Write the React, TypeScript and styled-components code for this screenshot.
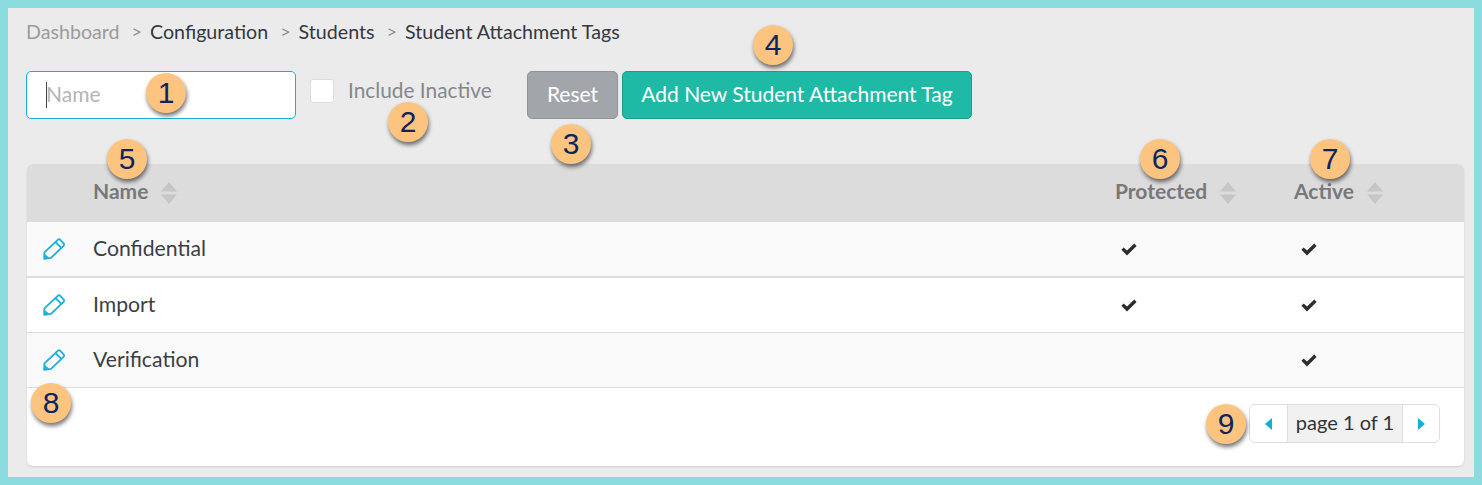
import React from "react";
import styled, { createGlobalStyle } from "styled-components";

const GlobalStyle = createGlobalStyle`
  html, body {
    margin: 0;
    padding: 0;
    background: #8adcdf;
  }
  body {
    font-family: Lato, "Liberation Sans", sans-serif;
  }
`;

const Frame = styled.div`
  position: relative;
  box-sizing: border-box;
  width: 1482px;
  height: 485px;
  border: 8px solid #8adcdf;
  background: #ebebeb;
  padding: 11px 10px 11px 18px;
  overflow: hidden;
`;

const Breadcrumbs = styled.nav`
  display: flex;
  align-items: center;
  height: 24px;
  font-size: 19.65px;
  color: #33383f;
`;

const Crumb = styled.span<{ $muted?: boolean }>`
  color: ${(p) => (p.$muted ? "#9b9b9b" : "#33383f")};
`;

const Sep = styled.span`
  color: #8f8f8f;
  font-size: 18px;
  margin: 0 8px 0 12px;
`;

const Toolbar = styled.div`
  display: flex;
  align-items: flex-start;
  margin-top: 28px;
  height: 48px;
`;

const NameInput = styled.div`
  box-sizing: border-box;
  display: flex;
  align-items: center;
  width: 270px;
  height: 48px;
  padding: 0 0 4px 19px;
  background: #fff;
  border: 1px solid #17b0d2;
  border-radius: 5px;
  font-size: 21px;
  color: #b4b4b4;
`;

const Caret = styled.span`
  width: 1px;
  height: 26px;
  background: #444;
  margin: 4px -1px 0 0;
`;

const CheckBox = styled.span`
  box-sizing: border-box;
  width: 24px;
  height: 24px;
  margin: 8px 14px 0 14px;
  background: #fff;
  border: 1px solid #dcdcdc;
  border-radius: 3px;
`;

const CheckLabel = styled.span`
  font-size: 20.85px;
  line-height: 37px;
  color: #85888c;
  width: 179px;
`;

const Button = styled.button<{ $primary?: boolean }>`
  box-sizing: border-box;
  height: 48px;
  padding: 0 0 4px;
  width: ${(p) => (p.$primary ? "350px" : "91px")};
  margin-left: ${(p) => (p.$primary ? "4px" : "0")};
  font-family: inherit;
  font-size: 21px;
  color: #fff;
  background: ${(p) => (p.$primary ? "#1fbaa5" : "#a2a6aa")};
  border: 1px solid ${(p) => (p.$primary ? "#1a9f8d" : "#909499")};
  border-radius: 5px;
`;

const Card = styled.section`
  box-sizing: border-box;
  margin: 45px 0 0 1px;
  width: 1437px;
  height: 302px;
  background: #fff;
  border-radius: 6px;
  box-shadow: 0 1px 2px rgba(0, 0, 0, 0.12);
  overflow: hidden;
`;

const COLUMNS = "66px 1022px 179px 1fr";

const HeadRow = styled.div`
  display: grid;
  grid-template-columns: ${COLUMNS};
  align-items: center;
  height: 58px;
  background: #dcdcdc;
  font-size: 21px;
  font-weight: 700;
  color: #77787a;
`;

const HeadCell = styled.div<{ $col: number }>`
  grid-column: ${(p) => p.$col};
  display: flex;
  align-items: center;
  gap: 13px;
`;

const HeadLabel = styled.span`
  margin-top: -6px;
`;

const Row = styled.div<{ $odd?: boolean; $thick?: boolean }>`
  display: grid;
  grid-template-columns: ${COLUMNS};
  align-items: center;
  box-sizing: border-box;
  height: ${(p) => (p.$thick ? "56px" : "55px")};
  background: ${(p) => (p.$odd ? "#f9f9f9" : "#fff")};
  border-bottom: ${(p) => (p.$thick ? "2px" : "1px")} solid #dedede;
  font-size: 21.2px;
  color: #3b3f45;
`;

const RowName = styled.div`
  margin-top: -2px;
`;

const IconCell = styled.div`
  display: flex;
  padding-left: 16px;
`;

const CheckCell = styled.div<{ $pad: number }>`
  display: flex;
  padding-left: ${(p) => p.$pad}px;
`;

const SortIcon = styled.svg`
  display: block;
  width: 16px;
  height: 24px;
  color: #c6c6c6;
`;

const Footer = styled.div`
  display: flex;
  justify-content: flex-end;
  padding: 16px 24px 0 0;
`;

const Pager = styled.div`
  display: flex;
  box-sizing: border-box;
  height: 39px;
  width: 191px;
  background: #fff;
  border: 1px solid #dedede;
  border-radius: 6px;
  overflow: hidden;
`;

const PagerArrow = styled.span<{ $width: number }>`
  display: flex;
  align-items: center;
  justify-content: center;
  width: ${(p) => p.$width}px;
`;

const PagerLabel = styled.span`
  flex: 1;
  display: flex;
  align-items: center;
  justify-content: center;
  padding-bottom: 3px;
  background: #f1f1f1;
  border-left: 1px solid #dedede;
  border-right: 1px solid #dedede;
  font-size: 20px;
  color: #2f3338;
`;

const Badge = styled.span<{ $x: number; $y: number }>`
  position: absolute;
  left: ${(p) => p.$x - 8}px;
  top: ${(p) => p.$y - 8}px;
  display: flex;
  align-items: center;
  justify-content: center;
  width: 40px;
  height: 40px;
  border-radius: 50%;
  background: #fdc47f;
  box-shadow: 1px 3px 4px rgba(0, 0, 0, 0.55);
  font-family: "Liberation Sans", Arial, sans-serif;
  font-size: 30px;
  color: #0c2461;
`;

const PencilIcon = () => (
  <svg width="22" height="22" viewBox="0 0 22 22" fill="none" stroke="#1bb0d8" strokeWidth="1.8" strokeLinejoin="round">
    <path d="M1.2 20.8 L1.4 14.4 L15 1.6 Q16 .9 17 1.6 L20.8 5.6 Q21.4 6.6 20.8 7.6 L8 19.8 Z" />
    <path d="M12.4 4 L18.6 10.2" />
    <path d="M2 20 V16.8 L5.4 19.6 Z" fill="#1bb0d8" strokeWidth="1" />
  </svg>
);

const CheckIcon = () => (
  <svg width="16" height="13" viewBox="0 0 16 13">
    <path d="M.4 6.8 L2.7 4.5 L6 7.6 L13.3 .6 L15.6 2.9 L6 12.4 Z" fill="#2d2d2d" />
  </svg>
);

const Sort = () => (
  <SortIcon viewBox="0 0 16 24">
    <path d="M8 1 L16 10.5 H0 Z M0 13.5 H16 L8 23 Z" fill="currentColor" />
  </SortIcon>
);

const PagerCaret = ({ dir }: { dir: "left" | "right" }) => (
  <svg width="8" height="12" viewBox="0 0 8 12">
    <path d={dir === "left" ? "M7 0 V12 L0 6 Z" : "M1 0 V12 L8 6 Z"} fill="#0fb0d6" />
  </svg>
);

const rows = [
  { name: "Confidential", isProtected: true, active: true },
  { name: "Import", isProtected: true, active: true },
  { name: "Verification", isProtected: false, active: true },
];

const badges: [string, number, number][] = [
  ["1", 146, 73],
  ["2", 388, 102],
  ["3", 551, 124],
  ["4", 753, 25],
  ["5", 107, 139],
  ["6", 1140, 139],
  ["7", 1310, 139],
  ["8", 31, 383],
  ["9", 1206, 404],
];

export default function App() {
  return (
    <>
      <GlobalStyle />
      <Frame>
        <Breadcrumbs>
          <Crumb $muted>Dashboard</Crumb>
          <Sep>&gt;</Sep>
          <Crumb>Configuration</Crumb>
          <Sep>&gt;</Sep>
          <Crumb>Students</Crumb>
          <Sep>&gt;</Sep>
          <Crumb>Student Attachment Tags</Crumb>
        </Breadcrumbs>
        <Toolbar>
          <NameInput>
            <Caret />
            Name
          </NameInput>
          <CheckBox />
          <CheckLabel>Include Inactive</CheckLabel>
          <Button>Reset</Button>
          <Button $primary>Add New Student Attachment Tag</Button>
        </Toolbar>
        <Card>
          <HeadRow>
            <HeadCell $col={2}>
              <HeadLabel>Name</HeadLabel>
              <Sort />
            </HeadCell>
            <HeadCell $col={3}>
              <HeadLabel>Protected</HeadLabel>
              <Sort />
            </HeadCell>
            <HeadCell $col={4}>
              <HeadLabel>Active</HeadLabel>
              <Sort />
            </HeadCell>
          </HeadRow>
          {rows.map((row, i) => (
            <Row key={row.name} $odd={i % 2 === 0} $thick={i === 0}>
              <IconCell>
                <PencilIcon />
              </IconCell>
              <RowName>{row.name}</RowName>
              <CheckCell $pad={6}>{row.isProtected && <CheckIcon />}</CheckCell>
              <CheckCell $pad={7}>{row.active && <CheckIcon />}</CheckCell>
            </Row>
          ))}
          <Footer>
            <Pager>
              <PagerArrow $width={37}>
                <PagerCaret dir="left" />
              </PagerArrow>
              <PagerLabel>page 1 of 1</PagerLabel>
              <PagerArrow $width={36}>
                <PagerCaret dir="right" />
              </PagerArrow>
            </Pager>
          </Footer>
        </Card>
        {badges.map(([label, x, y]) => (
          <Badge key={label} $x={x} $y={y}>
            {label}
          </Badge>
        ))}
      </Frame>
    </>
  );
}
